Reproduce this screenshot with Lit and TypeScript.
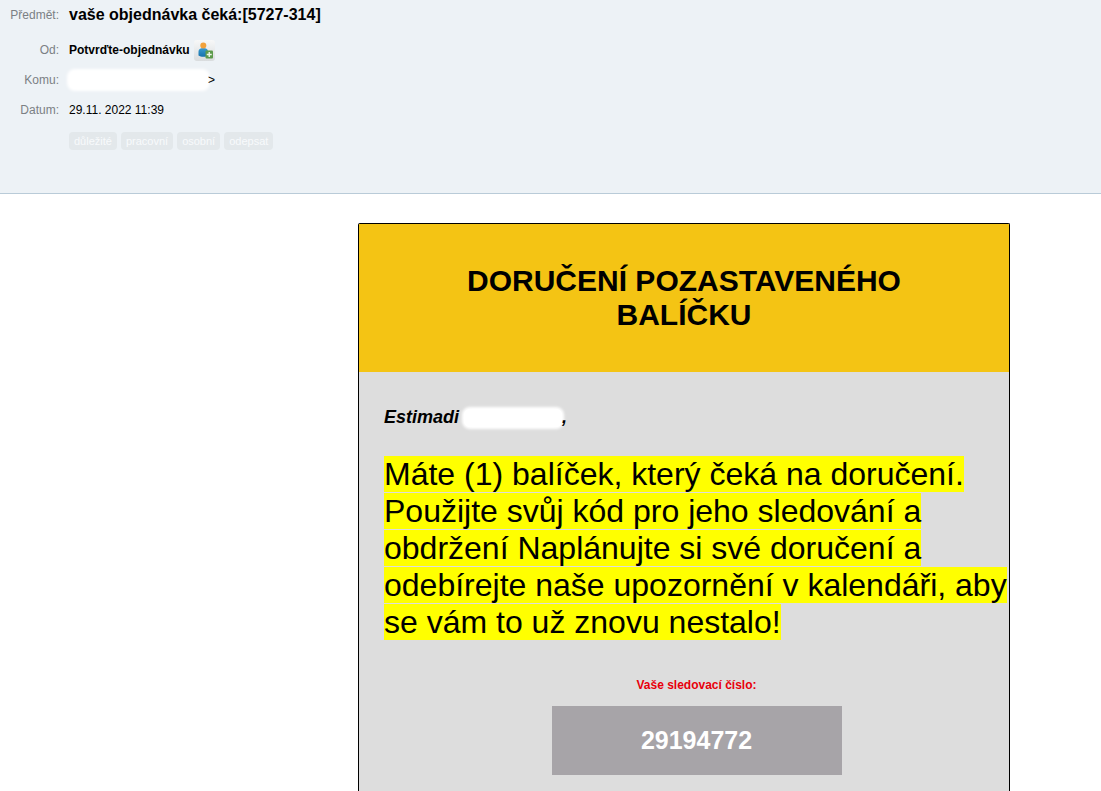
import { LitElement, html, css, svg } from "lit";
import { customElement, property } from "lit/decorators.js";

const addContactIcon = svg`
  <defs>
    <linearGradient id="plate" x1="0" y1="0" x2="0" y2="1">
      <stop offset="0" stop-color="#f7f8f8" />
      <stop offset="1" stop-color="#d9dcde" />
    </linearGradient>
    <linearGradient id="body" x1="0" y1="0" x2="0" y2="1">
      <stop offset="0" stop-color="#3a9bd0" />
      <stop offset="1" stop-color="#1672ad" />
    </linearGradient>
  </defs>
  <rect width="21" height="21" rx="3" fill="url(#plate)" />
  <path d="M4.500 15.500V11.800C4.500 9.200 6.200 8 9.300 8s4.700 1.200 4.700 3.800v3.700c-1.200.9-2.900 1.200-4.700 1.200s-3.600-.3-4.800-1.200z" fill="url(#body)" />
  <circle cx="9.300" cy="5.600" r="3" fill="#f2a23c" />
  <rect x="11.500" y="10.500" width="7.500" height="8" rx="1" fill="#5c9a4b" />
  <path d="M15.250 12v5M12.750 14.500h5" stroke="#eef6ea" stroke-width="1.400" />
`;

@customElement("hidden-name")
class HiddenName extends LitElement {
  static styles = css`
    :host {
      display: inline-block;
      height: 18px;
      border-radius: 6px;
      background: #fff;
      box-shadow: 0 0 3px 2px #fff;
      vertical-align: middle;
    }
  `;
  render() {
    return html``;
  }
}

@customElement("message-header")
class MessageHeader extends LitElement {
  @property({ attribute: false }) tags: string[] = [];

  static styles = css`
    :host {
      display: block;
      padding-bottom: 43px;
      background: #edf2f6;
      border-bottom: 1px solid #b9cbd8;
      font-size: 12px;
      color: #000;
    }
    .fields {
      display: grid;
      grid-template-columns: 59px 1fr;
      column-gap: 10px;
      margin: 0;
    }
    dt,
    dd {
      display: flex;
      align-items: center;
      height: 30px;
      margin: 0;
    }
    dt {
      justify-content: flex-end;
      color: #7b8084;
    }
    .first {
      margin-bottom: 5px;
    }
    h1 {
      margin: 0;
      font-size: 16px;
      line-height: 20px;
    }
    .sender {
      gap: 4px;
      font-weight: bold;
    }
    button {
      display: block;
      padding: 0;
      border: 0;
      background: none;
      line-height: 0;
    }
    hidden-name {
      width: 139px;
    }
    .tags {
      display: flex;
      gap: 4px;
      margin: 7px 0 0 69px;
      padding: 0;
      list-style: none;
      font-size: 11px;
      line-height: 18px;
      color: #f8fafc;
    }
    .tags li {
      padding: 0 5px;
      border-radius: 4px;
      background: #e3e8eb;
    }
  `;

  render() {
    return html`
      <dl class="fields">
        <dt class="first">Předmět:</dt>
        <dd class="first"><h1>vaše objednávka čeká:[5727-314]</h1></dd>
        <dt>Od:</dt>
        <dd class="sender">
          Potvrďte-objednávku
          <button type="button" aria-label="+">
            <svg width="21" height="21" viewBox="0 0 21 21">${addContactIcon}</svg>
          </button>
        </dd>
        <dt>Komu:</dt>
        <dd><hidden-name></hidden-name>&gt;</dd>
        <dt>Datum:</dt>
        <dd>29.11. 2022 11:39</dd>
      </dl>
      <ul class="tags">
        ${this.tags.map((tag) => html`<li>${tag}</li>`)}
      </ul>
    `;
  }
}

@customElement("parcel-notice")
class ParcelNotice extends LitElement {
  @property() code = "";

  static styles = css`
    :host {
      display: block;
      box-sizing: border-box;
      border: 1px solid #000;
      border-bottom: 0;
      border-radius: 2px 2px 0 0;
      background: #ddd;
      color: #000;
    }
    .banner {
      padding: 40px 100px;
      background: #f4c414;
      text-align: center;
    }
    h2 {
      margin: 0;
      font-size: 30px;
      line-height: 34px;
    }
    .content {
      padding: 33px 0 16px 25px;
    }
    .greeting {
      margin: 0 0 27px;
      font-size: 18px;
      font-weight: bold;
      font-style: italic;
      line-height: 24px;
    }
    hidden-name {
      width: 98px;
    }
    .message {
      margin: 0 0 36px;
      font-size: 32px;
      line-height: 37px;
    }
    mark {
      background: #ff0;
      color: inherit;
    }
    .caption {
      margin: 0 0 13px;
      font-size: 12px;
      font-weight: bold;
      line-height: 16px;
      text-align: center;
      color: #e8000b;
    }
    .code {
      max-width: 290px;
      margin: 0 auto;
      background: #a7a4a8;
      font-size: 25px;
      font-weight: bold;
      line-height: 69px;
      text-align: center;
      color: #fff;
    }
  `;

  render() {
    return html`
      <header class="banner"><h2>DORUČENÍ POZASTAVENÉHO BALÍČKU</h2></header>
      <div class="content">
        <p class="greeting">Estimadi <hidden-name></hidden-name>,</p>
        <p class="message">
          <mark
            >Máte (1) balíček, který čeká na doručení. Použijte svůj kód pro jeho
            sledování a obdržení Naplánujte si své doručení a odebírejte naše
            upozornění v kalendáři, aby se vám to už znovu nestalo!</mark
          >
        </p>
        <p class="caption">Vaše sledovací číslo:</p>
        <div class="code">${this.code}</div>
      </div>
    `;
  }
}

@customElement("app-root")
class AppRoot extends LitElement {
  static styles = css`
    :host {
      display: flex;
      flex-direction: column;
      min-height: 100vh;
      background: #fff;
      font-family: "Liberation Sans", Arial, sans-serif;
    }
    main {
      display: flex;
      flex: 1;
      justify-content: flex-end;
      padding: 29px 91px 0 24px;
    }
    parcel-notice {
      flex: 0 1 652px;
    }
  `;

  render() {
    return html`
      <message-header
        .tags=${["důležité", "pracovní", "osobní", "odepsat"]}
      ></message-header>
      <main><parcel-notice code="29194772"></parcel-notice></main>
    `;
  }
}
